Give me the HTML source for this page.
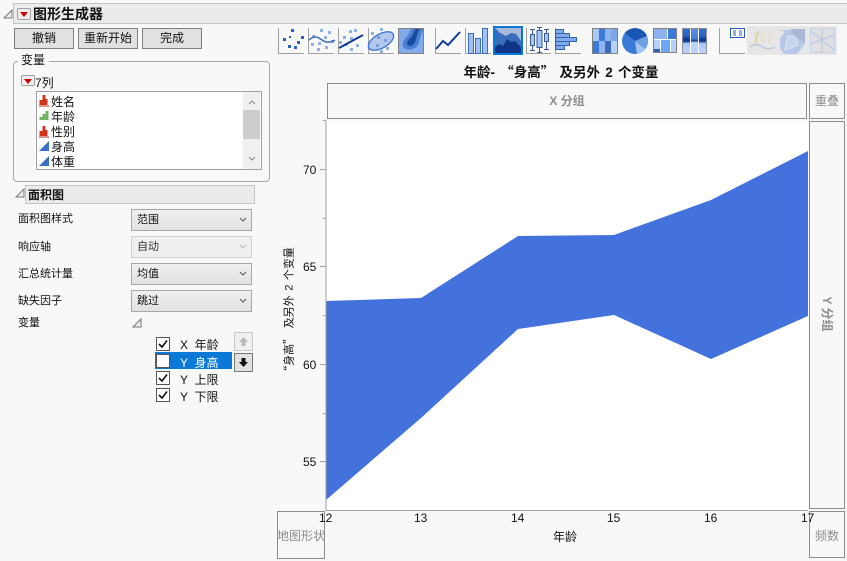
<!DOCTYPE html>
<html lang="zh"><head><meta charset="utf-8">
<style>
html,body{margin:0;padding:0;width:847px;height:561px;overflow:hidden;background:#f8f8f8}
body{position:relative;font-family:"Liberation Sans","Noto Sans CJK SC",sans-serif;font-size:11px;color:#111}
.a{position:absolute;white-space:nowrap}
.q{font-family:"Noto Sans CJK SC",sans-serif}
.btn{position:absolute;box-sizing:border-box;height:21px;top:28px;background:#e1e1e1;border:1px solid #808080;text-align:center;line-height:19px;font-size:12px}
.sel{position:absolute;left:131px;width:121px;height:22px;box-sizing:border-box;border:1px solid #a8a8a8;background:linear-gradient(#f0f0f0,#e2e2e2);padding-left:5px;line-height:21px;font-size:11px}
.sel svg{position:absolute;right:4px;top:7px}
.lab{position:absolute;left:18px;font-size:11px;line-height:14px;white-space:nowrap}
.drop{position:absolute;box-sizing:border-box;border:1px solid #a0a0a0;background:#f0eeee;border-radius:2px}
.drop:after{content:"";position:absolute;left:2px;top:3px;border:4px solid transparent;border-top:5px solid #d00000;border-bottom:0}
.zone{position:absolute;box-sizing:border-box;border:1px solid #8c8c8c;background:#f8f8f8;color:#8c8c8c;text-align:center;font-weight:bold;font-size:12px;white-space:nowrap;overflow:hidden}
.cb{position:absolute;left:156px;width:14px;height:14px;box-sizing:border-box;border:1px solid #555;background:#fff}
.rw{position:absolute;left:180px;font-size:12px;line-height:14px;white-space:pre}
.li{position:absolute;left:51px;font-size:12px;line-height:14px}
.tk{position:absolute;font-size:12px;line-height:13px}
</style></head><body>

<!-- title bar -->
<svg class="a" style="left:3px;top:9px" width="10" height="10"><path d="M1 9H9V1Z" fill="#eee" stroke="#777"/></svg>
<div class="a" style="left:13px;top:3px;width:834px;height:21px;box-sizing:border-box;background:#ebebeb;border:1px solid #c4c4c4;border-right:0"></div>
<div class="drop" style="left:17px;top:8px;width:14px;height:12px"></div>
<div class="a" style="left:33px;top:5px;font-size:14px;font-weight:bold;line-height:18px">图形生成器</div>

<div class="btn" style="left:14px;width:60px">撤销</div>
<div class="btn" style="left:78px;width:60px">重新开始</div>
<div class="btn" style="left:142px;width:60px">完成</div>

<!-- variables group -->
<div class="a" style="left:13px;top:61px;width:257px;height:121px;box-sizing:border-box;border:1px solid #a8a8a8;border-radius:4px"></div>
<div class="a" style="left:18px;top:53px;background:#f8f8f8;padding:0 4px 0 3px;font-size:12px;line-height:15px">变量</div>
<div class="drop" style="left:21px;top:75px;width:14px;height:11px"></div>
<div class="a" style="left:35px;top:76px;font-size:12px;line-height:14px">7列</div>
<div class="a" style="left:36px;top:91px;width:226px;height:79px;box-sizing:border-box;border:1px solid #a0a0a0;background:#fff"></div>
<div class="a" style="left:243px;top:92px;width:17px;height:77px;background:#f0f0f0"></div>
<div class="a" style="left:243px;top:110px;width:17px;height:29px;background:#cdcdcd"></div>
<svg class="a" style="left:248px;top:99px" width="8" height="6"><path d="M1 5L4 2L7 5" fill="none" stroke="#888"/></svg>
<svg class="a" style="left:248px;top:156px" width="8" height="6"><path d="M1 1L4 4L7 1" fill="none" stroke="#888"/></svg>

<svg class="a" style="left:38px;top:94px" width="14" height="76">
 <g fill="#d0341c"><rect x="1.5" y="6" width="3" height="5"/><rect x="4.5" y="1" width="3" height="10"/><rect x="7.5" y="5" width="2" height="6"/></g>
 <path d="M1 12H11" stroke="#b03020"/>
 <g fill="#6fb563"><rect x="1.5" y="23" width="3" height="3"/><rect x="4.5" y="20" width="3" height="6"/><rect x="7.5" y="17" width="3" height="9"/></g>
 <g fill="#d0341c"><rect x="1.5" y="37" width="3" height="5"/><rect x="4.5" y="32" width="3" height="10"/><rect x="7.5" y="36" width="2" height="6"/></g>
 <path d="M1 43H11" stroke="#b03020"/>
 <path d="M1 57L11 47V57Z" fill="#3a6fc4"/>
 <path d="M1 72L11 62V72Z" fill="#3a6fc4"/>
</svg>
<div class="li" style="top:95px">姓名</div>
<div class="li" style="top:110px">年龄</div>
<div class="li" style="top:125px">性别</div>
<div class="li" style="top:140px">身高</div>
<div class="li" style="top:155px">体重</div>

<!-- area section -->
<svg class="a" style="left:15px;top:188px" width="10" height="10"><path d="M1 9H9V1Z" fill="#eee" stroke="#777"/></svg>
<div class="a" style="left:25px;top:185px;width:230px;height:19px;box-sizing:border-box;background:#ebebeb;border:1px solid #c4c4c4;padding-left:2px;font-weight:bold;font-size:12px;line-height:18px">面积图</div>

<div class="lab" style="top:212px">面积图样式</div>
<div class="lab" style="top:240px">响应轴</div>
<div class="lab" style="top:267px">汇总统计量</div>
<div class="lab" style="top:294px">缺失因子</div>
<div class="lab" style="top:316px">变量</div>

<div class="sel" style="top:209px">范围<svg width="8" height="6"><path d="M1 1L4 4L7 1" fill="none" stroke="#555"/></svg></div>
<div class="sel" style="top:236px;border-color:#cfcfcf;background:#efefef;color:#333">自动<svg width="8" height="6"><path d="M1 1L4 4L7 1" fill="none" stroke="#bbb"/></svg></div>
<div class="sel" style="top:263px">均值<svg width="8" height="6"><path d="M1 1L4 4L7 1" fill="none" stroke="#555"/></svg></div>
<div class="sel" style="top:290px">跳过<svg width="8" height="6"><path d="M1 1L4 4L7 1" fill="none" stroke="#555"/></svg></div>
<svg class="a" style="left:132px;top:318px" width="10" height="10"><path d="M1 9H9V1Z" fill="#eee" stroke="#777"/></svg>

<div class="a" style="left:155px;top:352px;width:77px;height:17px;background:#0a78d7"></div>
<div class="cb" style="top:337px"></div><div class="cb" style="top:354px"></div><div class="cb" style="top:371px"></div><div class="cb" style="top:388px"></div>
<svg class="a" style="left:156px;top:337px" width="14" height="66" fill="none" stroke="#111" stroke-width="1.6"><path d="M3 7L6 10L11 3.5"/><path d="M3 41L6 44L11 37.5"/><path d="M3 58L6 61L11 54.5"/></svg>
<div class="rw" style="top:338px">X  年龄</div>
<div class="rw" style="top:356px;color:#fff">Y  身高</div>
<div class="rw" style="top:373px">Y  上限</div>
<div class="rw" style="top:390px">Y  下限</div>

<div class="a" style="left:234px;top:332px;width:19px;height:19px;box-sizing:border-box;border:1px solid #c8c8c8;background:#f0f0f0"></div>
<svg class="a" style="left:238px;top:336px" width="11" height="11"><path d="M5.5 1L10 6H7.5V10H3.5V6H1Z" fill="#b8b8b8"/></svg>
<div class="a" style="left:234px;top:353px;width:19px;height:19px;box-sizing:border-box;border:1px solid #777;background:#e1e1e1"></div>
<svg class="a" style="left:238px;top:357px" width="11" height="11"><path d="M3.5 1H7.5V5H10L5.5 10L1 5H3.5Z" fill="#111"/></svg>

<!-- toolbar -->
<svg class="a" style="left:275px;top:24px" width="572" height="34" viewBox="275 24 572 34">
 <defs>
  <linearGradient id="g1" x1="0" y1="0" x2="0" y2="1"><stop offset="0" stop-color="#2f6ed0"/><stop offset=".3" stop-color="#2a62c0"/><stop offset=".42" stop-color="#0a3a90"/><stop offset=".52" stop-color="#0f3f98"/><stop offset=".6" stop-color="#a8c8f8"/><stop offset="1" stop-color="#bcd4fa"/></linearGradient>
  <linearGradient id="g2" x1="0" y1="0" x2="0" y2="1"><stop offset="0" stop-color="#5a8edc"/><stop offset=".4" stop-color="#4a80d4"/><stop offset=".5" stop-color="#0f3f98"/><stop offset=".56" stop-color="#bcd4fa"/><stop offset="1" stop-color="#bcd4fa"/></linearGradient>
 </defs>
 <g fill="none" stroke="#a0a0a0">
  <path d="M278.5 28V53.5H304"/><path d="M308.5 28V53.5H334"/><path d="M338.5 28V53.5H364"/><path d="M368.5 28V53.5H394"/>
  <path d="M435.5 28V53.5H461"/><path d="M465.5 28V53.5H491"/><path d="M526.5 28V53.5H551"/><path d="M555.5 28V53.5H581"/><path d="M719.5 28V53.5H745"/>
 </g>
 <!-- scatter -->
 <g fill="#2a62c0">
  <rect x="291" y="29" width="3" height="3"/><rect x="283" y="38" width="3" height="3"/><rect x="289" y="36" width="2" height="2"/><rect x="301" y="36" width="3" height="3"/><rect x="297" y="41" width="3" height="3"/><rect x="288" y="45" width="3" height="3"/><rect x="294" y="46" width="3" height="3"/>
 </g>
 <!-- scatter with curve -->
 <g fill="#8fb0e6">
  <rect x="320" y="29" width="3" height="3"/><rect x="328" y="31" width="3" height="3"/><rect x="312" y="35" width="3" height="3"/><rect x="324" y="36" width="3" height="3"/><rect x="331" y="40" width="3" height="3"/><rect x="311" y="43" width="3" height="3"/><rect x="318" y="42" width="3" height="3"/><rect x="317" y="48" width="3" height="3"/><rect x="325" y="46" width="3" height="3"/>
 </g>
 <path d="M309 40C314 35 318 37 322 40S330 43 335 40" fill="none" stroke="#3f6db8" stroke-width="1.5"/>
 <!-- scatter with line -->
 <g fill="#8fb0e6">
  <rect x="349" y="30" width="3" height="3"/><rect x="354" y="29" width="3" height="3"/><rect x="343" y="36" width="3" height="3"/><rect x="350" y="37" width="3" height="3"/><rect x="339" y="41" width="3" height="3"/><rect x="345" y="43" width="3" height="3"/><rect x="356" y="44" width="3" height="3"/><rect x="350" y="48" width="3" height="3"/>
 </g>
 <path d="M339 48L363 35" stroke="#0f3a98" stroke-width="2"/>
 <!-- ellipse -->
 <g fill="#8fb0e6">
  <rect x="371" y="32" width="3" height="3"/><rect x="380" y="28" width="3" height="3"/><rect x="372" y="38" width="3" height="3"/><rect x="389" y="36" width="3" height="3"/><rect x="370" y="47" width="3" height="3"/><rect x="386" y="47" width="3" height="3"/><rect x="380" y="50" width="3" height="3"/>
 </g>
 <ellipse cx="381" cy="41" rx="14" ry="7" transform="rotate(-30 381 41)" fill="#b4c8ee" stroke="#3a73d8" stroke-width="1.3"/>
 <g fill="#7c9edb"><rect x="377" y="36" width="3" height="3"/><rect x="384" y="39" width="3" height="3"/><rect x="376" y="44" width="3" height="3"/></g>
 <!-- contour -->
 <rect x="398.500" y="28.500" width="25" height="25" fill="#83abeb" stroke="#808080"/>
 <path d="M411 29H423V31C420 35 420 40 418 45C414 51 405 51 403 46C401 40 408 38 411 29Z" fill="#4a80d4"/>
 <path d="M415 29H420C417 33 417 37 415 42C413 47 407 47 407 43C407 40 413 37 415 29Z" fill="#184c9c"/>
 <!-- line -->
 <path d="M436 49L443 41L448 45L460 32" fill="none" stroke="#0f3a98" stroke-width="2"/>
 <!-- bars -->
 <g fill="#a3c1f5" stroke="#3a6cc0"><rect x="468.500" y="33.500" width="5" height="20"/><rect x="475.500" y="38.500" width="5" height="15"/><rect x="482.500" y="28.500" width="5" height="25"/></g>
 <!-- area selected -->
 <rect x="494" y="27" width="28" height="27" fill="#a8b8d8" stroke="#0a78d7" stroke-width="2"/>
 <path d="M495 28L500 33L506 36L511 33L516 34L521 41V53H495Z" fill="#3a6cbc"/>
 <path d="M495 47L499 44L503 46L507 39L511 42L515 41L521 47V53H495Z" fill="#0f3488"/>
 <!-- box -->
 <g stroke="#3a5a98" fill="#a9c5f5"><path d="M532.500 30V50M539.500 28V52M546.500 30V49" fill="none"/><rect x="530.500" y="34.500" width="4" height="11"/><rect x="537" y="30.500" width="5" height="17"/><rect x="544.500" y="33.500" width="4" height="8"/><path d="M530 29.500H535M530 50.500H535M537 27.500H542M537 52.500H542M544 29.500H549M544 49.500H549" fill="none"/></g>
 <!-- hist -->
 <g fill="#82a9ea" stroke="#2f63b8"><rect x="555.500" y="29.500" width="8" height="4"/><rect x="555.500" y="33.500" width="14" height="4"/><rect x="555.500" y="37.500" width="21" height="4"/><rect x="555.500" y="41.500" width="14" height="4"/><rect x="555.500" y="45.500" width="9" height="4"/></g>
 <!-- heatmap -->
 <rect x="592.500" y="28.500" width="25" height="25" fill="#a9c8f8" stroke="#808080"/>
 <rect x="593" y="29" width="6" height="12" fill="#a9c8f8"/><rect x="593" y="41" width="6" height="12" fill="#3a7ad8"/>
 <rect x="599" y="29" width="6" height="12" fill="#3a7ad8"/><rect x="599" y="41" width="6" height="12" fill="#8fb4ee"/>
 <rect x="605" y="29" width="6" height="12" fill="#8fb4ee"/><rect x="605" y="41" width="6" height="12" fill="#3a6cc0"/>
 <rect x="611" y="29" width="6" height="12" fill="#7ba6ea"/><rect x="611" y="41" width="6" height="12" fill="#b6d0fa"/>
 <!-- pie -->
 <circle cx="635" cy="41" r="13" fill="#3a7ad8"/>
 <path d="M635 41L625 33A13 13 0 0 1 647 36Z" fill="#1c56b4"/>
 <path d="M635 41L647 36A13 13 0 0 1 645 49Z" fill="#6ea0e4"/>
 <path d="M635 41L645 49A13 13 0 0 1 637 54Z" fill="#a3c4f6"/>
 <!-- treemap -->
 <rect x="653.500" y="28.500" width="23" height="24" fill="#fff" stroke="#808080"/>
 <rect x="654" y="29" width="13" height="10" fill="#8eb2ee"/><rect x="668" y="29" width="8" height="10" fill="#3a7ad8"/>
 <rect x="654" y="40" width="6" height="12" fill="#b6d0fa"/><rect x="654" y="49" width="6" height="3" fill="#2c62b8"/><rect x="661" y="40" width="9" height="12" fill="#6ea6f6"/><rect x="671" y="40" width="5" height="12" fill="#b6d0fa"/>
 <!-- mosaic -->
 <rect x="682.500" y="28.500" width="24" height="25" fill="#fff" stroke="#909090"/>
 <rect x="683" y="29" width="7" height="24" fill="url(#g1)"/><rect x="691" y="29" width="7" height="24" fill="url(#g2)"/><rect x="699" y="29" width="7" height="24" fill="url(#g1)"/>
 <!-- caption icon -->
 <rect x="730.500" y="28.500" width="14" height="9" fill="#fff" stroke="#2a5cc0"/>
 <path d="M733 31H736M733 33H736M733 35H736M739 31H742M739 33H742M739 35H742" stroke="#2a5cc0"/>
 <!-- disabled group -->
 <rect x="747" y="26" width="90" height="29" fill="#e6e6e6"/>
 <text x="754" y="42" font-family="Liberation Serif,serif" font-style="italic" font-weight="bold" font-size="16" fill="#e2d2a0">f</text>
 <text x="761" y="40" font-family="Liberation Serif,serif" font-size="10" fill="#e2d2a0">(·)</text>
 <path d="M750 47C756 42 760 46 765 48S772 48 775 47" fill="none" stroke="#b8c8e0" stroke-width="1.300"/>
 <path d="M780 30H805V44L797 54H784L780 48V38L785 32Z" fill="#b6c8e8"/>
 <path d="M790 29H805V43L795 36Z" fill="#a8b8d4"/>
 <path d="M788 36L795 37L798 45L785 50Z" fill="#c4d4ee" stroke="#e6e6e6"/>
 <rect x="810.500" y="28.500" width="24" height="24" fill="#e0e0e0" stroke="#c4d0e4"/>
 <path d="M811 31L834 50M811 44L834 35M822 29V52" stroke="#b8cae6" fill="none" stroke-width="1.300"/>
</svg>

<!-- chart title -->
<div class="a" style="left:327px;width:468px;top:63px;text-align:center;font-weight:bold;font-size:13.5px;word-spacing:1.5px;line-height:16px">年龄- <span class="q">“</span>身高<span class="q">”</span> 及另外 2 个变量</div>

<!-- zones -->
<div class="zone" style="left:327px;top:83px;width:480px;height:36px;line-height:35px">X 分组</div>
<div class="zone" style="left:809px;top:83px;width:36px;height:36px;line-height:35px;font-weight:normal">重叠</div>
<div class="zone" style="left:809px;top:121px;width:36px;height:388px;"></div>
<div class="a" style="left:809px;top:307px;width:36px;height:14px;text-align:center;color:#8c8c8c;font-weight:bold;font-size:12px;line-height:14px;transform:rotate(90deg)">Y 分组</div>
<div class="zone" style="left:277px;top:511px;width:48px;height:48px;line-height:49px;font-weight:normal"><span style="position:absolute;left:-1px;top:0">地图形状</span></div>
<div class="zone" style="left:809px;top:511px;width:36px;height:47px;line-height:49px;font-weight:normal">频数</div>

<!-- plot -->
<svg class="a" style="left:320px;top:115px" width="490" height="400" viewBox="320 115 490 400">
 <rect x="326" y="121" width="482" height="389" fill="#fff"/>
 <polygon points="326,301 421,298 518,236 614,235 711,200 808,151 808,316 711,359 614,315 518,329 421,418 326,500" fill="#4472dc"/>
 <g stroke="#a0a0a0" fill="none">
  <path d="M326 120.500V510.500H808"/>
  <path d="M323 120.500H326M320 169.500H326M323 218.500H326M320 266.500H326M323 315.500H326M320 364.500H326M323 413.500H326M320 461.500H326"/>
 </g>
</svg>

<div class="tk" style="left:303px;top:164px">70</div>
<div class="tk" style="left:303px;top:261px">65</div>
<div class="tk" style="left:303px;top:359px">60</div>
<div class="tk" style="left:303px;top:456px">55</div>
<div class="tk" style="left:319px;top:512px">12</div>
<div class="tk" style="left:414px;top:512px">13</div>
<div class="tk" style="left:511px;top:512px">14</div>
<div class="tk" style="left:607px;top:512px">15</div>
<div class="tk" style="left:704px;top:512px">16</div>
<div class="tk" style="left:801px;top:512px">17</div>
<div class="a" style="left:553px;top:530px;font-size:12px;line-height:14px">年龄</div>
<div class="a" style="left:289px;top:312px;width:0;height:0"><div class="a" style="transform:translate(-50%,-50%) rotate(-90deg);font-size:11px;line-height:14px;word-spacing:1.5px"><span class="q">“</span>身高<span class="q">”</span> 及另外 2 个变量</div></div>
</body></html>
